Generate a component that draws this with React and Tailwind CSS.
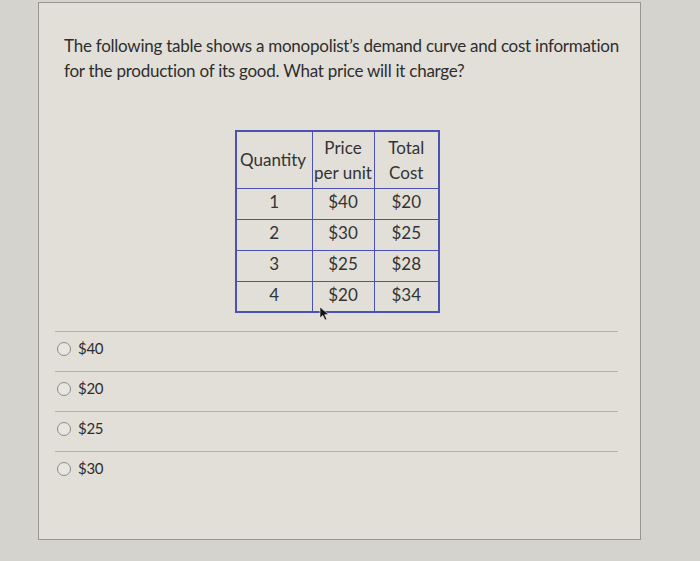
const rows = [
  ['1', '$40', '$20'],
  ['2', '$30', '$25'],
  ['3', '$25', '$28'],
  ['4', '$20', '$34']
]

const options = ['$40', '$20', '$25', '$30']

export default function App() {
  return (
    <div
      className="relative h-[561px] w-[700px] overflow-hidden bg-[#d5d3cd] pt-[2px] text-[#2e2e2e]"
      style={{ fontFamily: 'Lato, "Open Sans", sans-serif' }}
    >
      <div className="ml-[38px] h-[538px] w-[603px] border border-[#97958f] bg-[#e2dfd8]">
        <p className="pl-[25px] pt-[30px] text-[17px] leading-[25px] tracking-[-0.25px]">
          The following table shows a monopolist’s demand curve and cost information
          <br />
          for the production of its good. What price will it charge?
        </p>

        <table className="ml-[196px] mt-[47px] border-collapse border-2 border-[#4b52b3] text-[17px] text-[#333]">
          <thead>
            <tr className="h-[57px]">
              <th className="w-[76px] border border-[#4b52b3] px-[3px] text-left font-normal">Quantity</th>
              <th className="w-[62px] border border-[#4b52b3] text-center font-normal leading-[25px]">
                Price
                <br />
                per unit
              </th>
              <th className="w-[65px] border border-[#4b52b3] text-center font-normal leading-[25px]">
                Total
                <br />
                Cost
              </th>
            </tr>
          </thead>
          <tbody>
            {rows.map((r) => (
              <tr key={r[0]} className="h-[31px]">
                {r.map((c, i) => (
                  <td key={i} className="border border-[#4b52b3] pb-[3px] text-center">
                    {c}
                  </td>
                ))}
              </tr>
            ))}
          </tbody>
        </table>

        <div className="ml-[16px] mr-[22px] mt-[18px]">
          {options.map((o) => (
            <div key={o} className="flex h-[40px] items-center gap-[7px] border-t border-[#b5b3ad] pb-[6px] pl-[2px]">
              <span className="h-[14px] w-[14px] rounded-full border border-[#8d8b86] bg-[#e8e6e0]" />
              <span className="text-[15px] tracking-[-0.3px]">{o}</span>
            </div>
          ))}
        </div>
      </div>

      <svg className="absolute left-[319px] top-[306px]" width="11" height="15" viewBox="0 0 11 15">
        <path d="M1 1 L1 12 L3.8 9.4 L6 14 L7.8 13.2 L5.7 8.7 L9.5 8.5 Z" fill="#111" stroke="#eee" strokeWidth="0.6" />
      </svg>
    </div>
  )
}
